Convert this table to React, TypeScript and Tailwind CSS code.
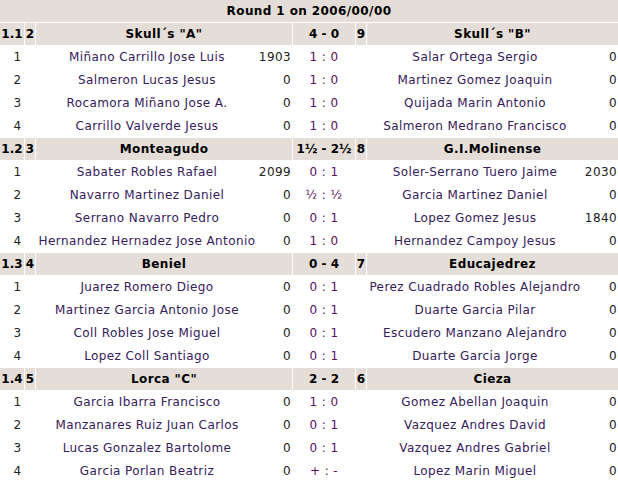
import React from 'react'

type Board = { no: number; a: string; ra: number; score: string; b: string; rb: number }
type Match = { id: string; na: number; ta: string; result: string; nb: number; tb: string; boards: Board[] }

const matches: Match[] = [
  {
    id: '1.1', na: 2, ta: 'Skull´s "A"', result: '4 - 0', nb: 9, tb: 'Skull´s "B"',
    boards: [
      { no: 1, a: 'Miñano Carrillo Jose Luis', ra: 1903, score: '1 : 0', b: 'Salar Ortega Sergio', rb: 0 },
      { no: 2, a: 'Salmeron Lucas Jesus', ra: 0, score: '1 : 0', b: 'Martinez Gomez Joaquin', rb: 0 },
      { no: 3, a: 'Rocamora Miñano Jose A.', ra: 0, score: '1 : 0', b: 'Quijada Marin Antonio', rb: 0 },
      { no: 4, a: 'Carrillo Valverde Jesus', ra: 0, score: '1 : 0', b: 'Salmeron Medrano Francisco', rb: 0 },
    ],
  },
  {
    id: '1.2', na: 3, ta: 'Monteagudo', result: '1½ - 2½', nb: 8, tb: 'G.I.Molinense',
    boards: [
      { no: 1, a: 'Sabater Robles Rafael', ra: 2099, score: '0 : 1', b: 'Soler-Serrano Tuero Jaime', rb: 2030 },
      { no: 2, a: 'Navarro Martinez Daniel', ra: 0, score: '½ : ½', b: 'Garcia Martinez Daniel', rb: 0 },
      { no: 3, a: 'Serrano Navarro Pedro', ra: 0, score: '0 : 1', b: 'Lopez Gomez Jesus', rb: 1840 },
      { no: 4, a: 'Hernandez Hernadez Jose Antonio', ra: 0, score: '1 : 0', b: 'Hernandez Campoy Jesus', rb: 0 },
    ],
  },
  {
    id: '1.3', na: 4, ta: 'Beniel', result: '0 - 4', nb: 7, tb: 'Educajedrez',
    boards: [
      { no: 1, a: 'Juarez Romero Diego', ra: 0, score: '0 : 1', b: 'Perez Cuadrado Robles Alejandro', rb: 0 },
      { no: 2, a: 'Martinez Garcia Antonio Jose', ra: 0, score: '0 : 1', b: 'Duarte Garcia Pilar', rb: 0 },
      { no: 3, a: 'Coll Robles Jose Miguel', ra: 0, score: '0 : 1', b: 'Escudero Manzano Alejandro', rb: 0 },
      { no: 4, a: 'Lopez Coll Santiago', ra: 0, score: '0 : 1', b: 'Duarte Garcia Jorge', rb: 0 },
    ],
  },
  {
    id: '1.4', na: 5, ta: 'Lorca "C"', result: '2 - 2', nb: 6, tb: 'Cieza',
    boards: [
      { no: 1, a: 'Garcia Ibarra Francisco', ra: 0, score: '1 : 0', b: 'Gomez Abellan Joaquin', rb: 0 },
      { no: 2, a: 'Manzanares Ruiz Juan Carlos', ra: 0, score: '0 : 1', b: 'Vazquez Andres David', rb: 0 },
      { no: 3, a: 'Lucas Gonzalez Bartolome', ra: 0, score: '0 : 1', b: 'Vazquez Andres Gabriel', rb: 0 },
      { no: 4, a: 'Garcia Porlan Beatriz', ra: 0, score: '+ : -', b: 'Lopez Marin Miguel', rb: 0 },
    ],
  },
]

// 8 columns: no | no | team A name | rating | result | no | team B name | rating
const cols = 'grid grid-cols-[24px_10px_222px_33px_62px_10px_216px_34px] gap-x-px h-[22px]'
const head = 'bg-[#e5ddd7] flex items-center justify-center font-bold text-black'

function MatchBlock({ m }: { m: Match }) {
  return (
    <>
      <div className={cols}>
        <div className={`${head} tracking-normal`}>{m.id}</div>
        <div className={head}>{m.na}</div>
        <div className={`${head} col-span-2`}>{m.ta}</div>
        <div className={`${head} whitespace-nowrap tracking-normal`}>{m.result}</div>
        <div className={head}>{m.nb}</div>
        <div className={`${head} col-span-2`}>{m.tb}</div>
      </div>
      {m.boards.map((b) => (
        <div key={b.no} className={cols}>
          <div className="col-span-2 flex items-center justify-center text-[#222]">{b.no}</div>
          <div className="flex items-center justify-center whitespace-nowrap text-[#35205a]">{b.a}</div>
          <div className="flex items-center justify-end pr-[1px] text-[#222]">{b.ra}</div>
          <div className="flex items-center justify-center whitespace-nowrap text-[#5a1060]">{b.score}</div>
          <div />
          <div className="flex items-center justify-center whitespace-nowrap text-[#35205a]">{b.b}</div>
          <div className="flex items-center justify-end pr-[1px] text-[#222]">{b.rb}</div>
        </div>
      ))}
    </>
  )
}

export default function App() {
  return (
    <div
      className="w-[618px] h-[482px] overflow-hidden bg-white flex flex-col gap-y-px pt-px text-[12px] leading-none tracking-[0.4px]"
      style={{ fontFamily: '"DejaVu Sans", Verdana, sans-serif' }}
    >
      <div className="h-[22px] -mt-px shrink-0 bg-[#e5ddd7] flex items-center justify-center font-bold text-black">
        Round 1 on 2006/00/00
      </div>
      {matches.map((m) => (
        <MatchBlock key={m.id} m={m} />
      ))}
    </div>
  )
}
